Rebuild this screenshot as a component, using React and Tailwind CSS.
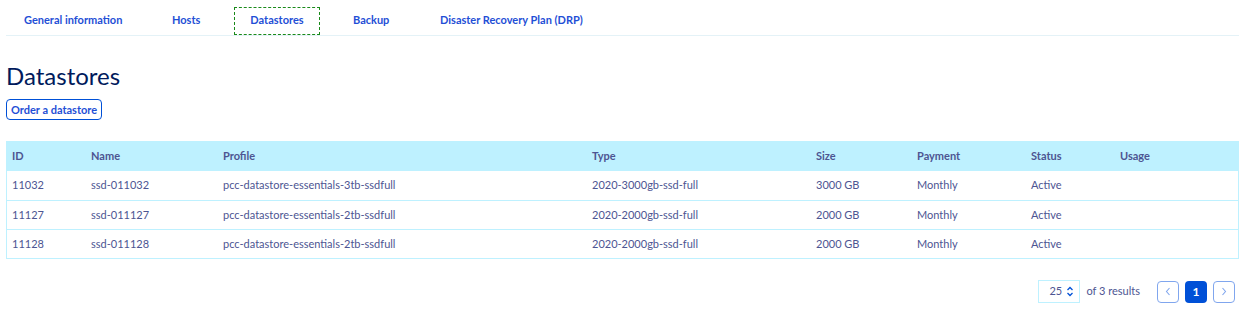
import React from "react";

const rows = [
  ["11032", "ssd-011032", "pcc-datastore-essentials-3tb-ssdfull", "2020-3000gb-ssd-full", "3000 GB", "Monthly", "Active"],
  ["11127", "ssd-011127", "pcc-datastore-essentials-2tb-ssdfull", "2020-2000gb-ssd-full", "2000 GB", "Monthly", "Active"],
  ["11128", "ssd-011128", "pcc-datastore-essentials-2tb-ssdfull", "2020-2000gb-ssd-full", "2000 GB", "Monthly", "Active"],
];

const cols = ["ID", "Name", "Profile", "Type", "Size", "Payment", "Status", "Usage"];
const widths = ["w-[79px]", "w-[132px]", "w-[369px]", "w-[224px]", "w-[101px]", "w-[114px]", "w-[89px]", ""];

export default function App() {
  return (
    <div className="w-[1245px] h-[311px] bg-white px-[6px] text-[#4d5592]" style={{ fontFamily: "Lato, 'Open Sans', sans-serif" }}>
      <div className="flex items-stretch h-[36px] border-b border-[#e4f2f7] pt-[7px] text-[11px] font-bold text-[#1f4fd6] whitespace-nowrap">
        <div className="w-[166px] pl-[18px] flex items-center pb-[2px]">General information</div>
        <div className="w-[62px] flex items-center pb-[2px]">Hosts</div>
        <div className="w-[86px] flex items-center justify-center border border-dashed border-[#1a8a1a] pb-[2px]">Datastores</div>
        <div className="w-[120px] pl-[33px] flex items-center pb-[2px]">Backup</div>
        <div className="flex items-center pb-[2px]">Disaster Recovery Plan (DRP)</div>
      </div>
      <h1 className="mt-[25px] text-[24px] leading-[30px] text-[#001a5c] font-normal">Datastores</h1>
      <button className="mt-[8px] h-[21px] px-[4px] border border-[#0050d7] rounded-[4px] text-[11px] font-bold text-[#1f4fd6] leading-none">Order a datastore</button>
      <div className="mt-[21px] border border-[#bef1ff]">
        <div className="flex h-[29px] items-center bg-[#bef1ff] text-[11px] font-bold">
          {cols.map((c, i) => (
            <div key={c} className={`${widths[i]} pl-[5px] shrink-0`}>{c}</div>
          ))}
        </div>
        {rows.map((r, ri) => (
          <div key={ri} className={`flex h-[29px] items-center text-[11px] ${ri > 0 ? "border-t border-[#bef1ff]" : ""}`}>
            {r.map((c, i) => (
              <div key={i} className={`${widths[i]} pl-[5px] shrink-0`}>{c}</div>
            ))}
          </div>
        ))}
      </div>
      <div className="flex justify-end items-center mt-[21px] pr-[4px] text-[11px]">
        <div className="w-[42px] h-[23px] border border-[#bef1ff] flex items-center justify-between pl-[10px] pr-[5px]">
          <span>25</span>
          <svg width="8" height="11" viewBox="0 0 8 11" fill="none" stroke="#0050d7" strokeWidth="1.3"><path d="M1.5 4 L4 1.5 L6.5 4" /><path d="M1.5 7 L4 9.5 L6.5 7" /></svg>
        </div>
        <span className="ml-[6px]">of 3 results</span>
        <button className="ml-[17px] w-[22px] h-[22px] border border-[#80a6ee] rounded-[4px] flex items-center justify-center">
          <svg width="6" height="9" viewBox="0 0 6 9" fill="none" stroke="#80a6ee" strokeWidth="1.1"><path d="M4.5 1 L1.5 4.5 L4.5 8" /></svg>
        </button>
        <button className="ml-[6px] w-[22px] h-[22px] bg-[#0050d7] rounded-[4px] text-white font-bold text-[12px] flex items-center justify-center">1</button>
        <button className="ml-[6px] w-[22px] h-[22px] border border-[#80a6ee] rounded-[4px] flex items-center justify-center">
          <svg width="6" height="9" viewBox="0 0 6 9" fill="none" stroke="#80a6ee" strokeWidth="1.1"><path d="M1.5 1 L4.5 4.5 L1.5 8" /></svg>
        </button>
      </div>
    </div>
  );
}
